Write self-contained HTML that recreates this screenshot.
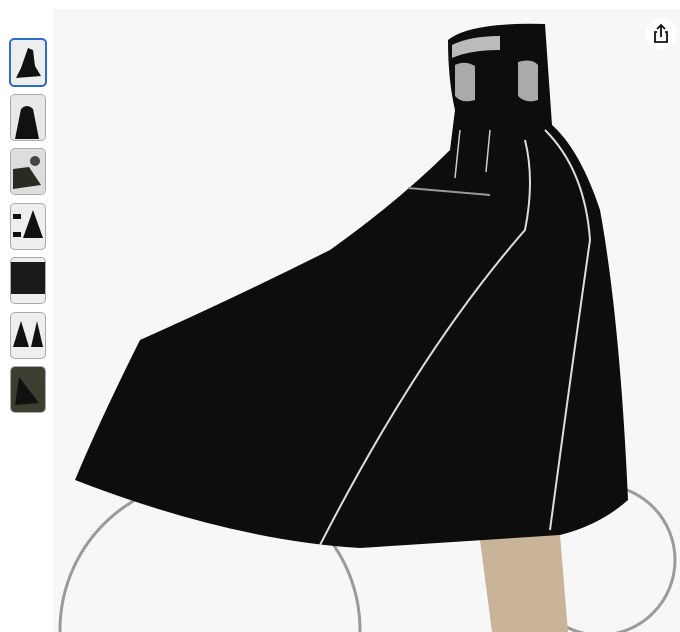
<!DOCTYPE html>
<html><head><style>
html,body{margin:0;padding:0;background:#fff;width:680px;height:632px;overflow:hidden;font-family:"Liberation Sans",sans-serif}
.main{position:absolute;left:53px;top:9px;width:627px;height:623px;background:#f7f7f7;overflow:hidden}
.th{position:absolute;left:10px;width:34px;height:45px;border:1px solid #aaa;border-radius:5px;background:#eee;overflow:hidden}
.th.sel{border:2px solid #2a6fc9;left:9px}
.share{position:absolute;left:645px;top:18px;width:32px;height:32px;border-radius:50%;background:#fff}
</style></head><body>
<div class="th sel" style="top:38px"><svg width="34" height="45"><path d="M17 8 L22 10 L24 26 L30 36 L5 38 L10 28 Z" fill="#111"/></svg></div>
<div class="th" style="top:94px"><svg width="34" height="45"><rect width="34" height="45" fill="#e8e8e8"/><path d="M10 14 Q16 8 22 14 L28 44 L4 44 Z" fill="#111"/></svg></div>
<div class="th" style="top:148px"><svg width="34" height="45"><rect width="34" height="45" fill="#ddd"/><path d="M2 20 L18 18 L30 36 L2 40 Z" fill="#2a2a22"/><circle cx="24" cy="12" r="5" fill="#444"/></svg></div>
<div class="th" style="top:203px"><svg width="34" height="45"><path d="M22 6 L32 34 L12 34 Z" fill="#111"/><rect x="2" y="10" width="8" height="5" fill="#111"/><rect x="2" y="28" width="8" height="5" fill="#111"/></svg></div>
<div class="th" style="top:257px"><svg width="34" height="45"><rect y="4" width="34" height="32" fill="#1a1a1a"/></svg></div>
<div class="th" style="top:312px"><svg width="34" height="45"><path d="M10 8 L18 34 L2 34 Z" fill="#111"/><path d="M26 8 L32 34 L20 34 Z" fill="#111"/></svg></div>
<div class="th" style="top:366px"><svg width="34" height="45"><rect width="34" height="45" fill="#3a3f30"/><path d="M8 10 L28 36 L4 38 Z" fill="#111"/></svg></div>
<div class="main">
<svg width="627" height="623" viewBox="53 9 627 623">
<g fill="none" stroke="#9a9a9a" stroke-width="3">
<circle cx="210" cy="630" r="150"/>
<circle cx="600" cy="560" r="75"/>
</g>
<path d="M480 540 L560 535 L568 632 L492 632 Z" fill="#c9b49a"/>
<path d="M448 40 Q470 22 545 24 L552 125 Q580 150 600 210 Q620 320 628 500 Q600 525 560 535 L360 548 Q230 540 75 480 Q100 420 140 340 Q230 300 330 250 Q400 200 450 150 L455 110 Q448 80 448 40 Z" fill="#0d0d0d"/>
<path d="M452 45 Q470 36 500 36 L500 50 Q470 50 452 58 Z" fill="#bbb"/>
<path d="M455 65 Q465 60 475 66 L475 100 Q462 104 455 96 Z" fill="#aaa"/>
<path d="M518 62 Q532 58 538 65 L538 100 Q526 104 518 96 Z" fill="#aaa"/>
<path d="M460 130 L455 178 M490 130 L486 172" stroke="#ccc" stroke-width="1.5"/>
<path d="M408 188 L490 195" stroke="#999" stroke-width="2"/>
<path d="M545 130 Q585 170 590 240 Q570 380 550 530" fill="none" stroke="#ddd" stroke-width="2"/>
<path d="M525 140 Q535 180 525 230 Q420 350 320 545" fill="none" stroke="#ddd" stroke-width="2"/>
</svg>
</div>
<div class="share"><svg width="32" height="32" viewBox="0 0 32 32" fill="none" stroke="#111" stroke-width="1.8"><path d="M12 14 H10 V24 H22 V14 H20"/><path d="M16 19 V7 M12 11 L16 7 L20 11"/></svg></div>
</body></html>
